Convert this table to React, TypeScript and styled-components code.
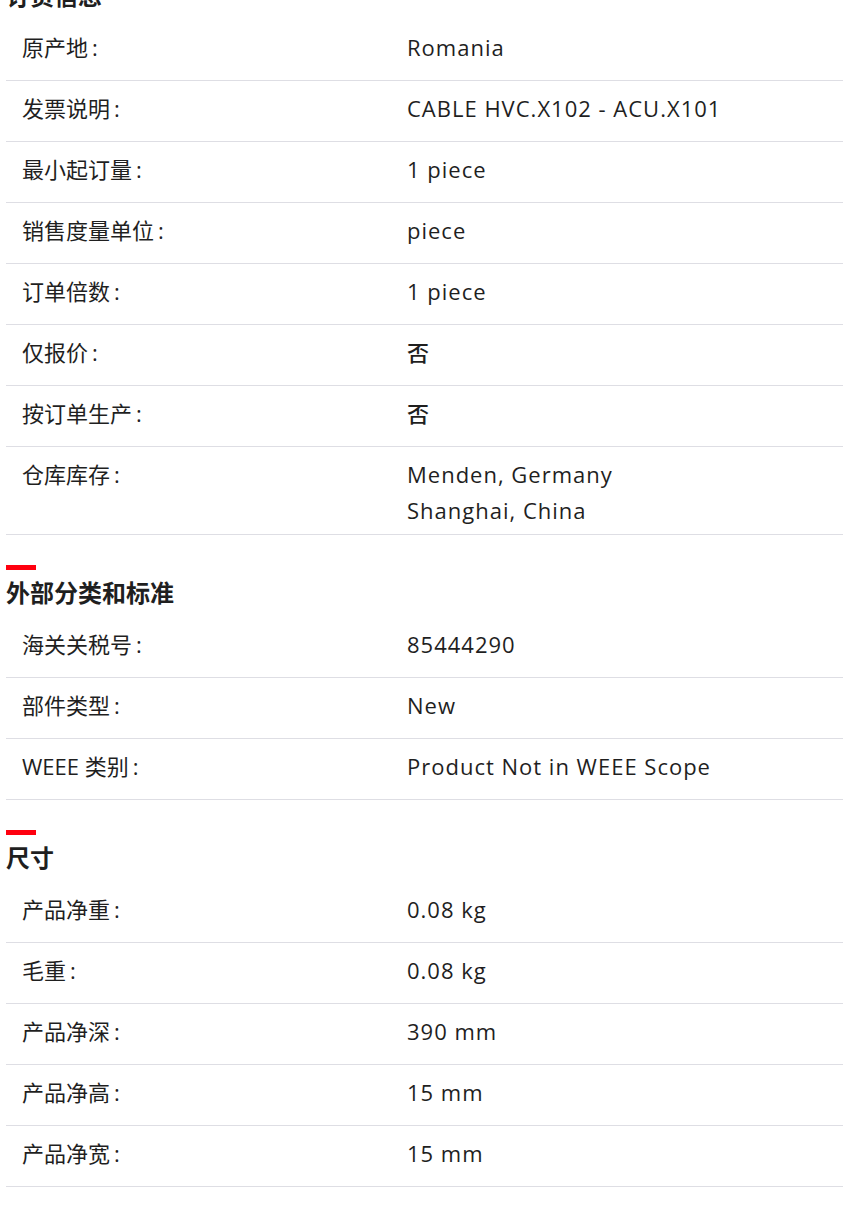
import React from 'react';
import styled, { createGlobalStyle } from 'styled-components';

const GlobalStyle = createGlobalStyle`
  html, body {
    margin: 0;
    padding: 0;
    background: #ffffff;
  }
  body {
    font-family: "Open Sans", "Noto Sans CJK SC", sans-serif;
    color: #1f1f1f;
  }
`;

const Page = styled.main`
  margin-top: -32px;
  padding-left: 6px;
  overflow: hidden;
`;

const Section = styled.section`
  & + & {
    margin-top: 30px;
  }
`;

const RedBar = styled.div`
  width: 30px;
  height: 5px;
  background: #ff000f;
`;

const Heading = styled.h2`
  margin: 0 0 7px;
  padding-top: 4px;
  font-family: "Noto Sans CJK SC", sans-serif;
  font-size: 24px;
  font-weight: 700;
  line-height: 36px;
  color: #1f1f1f;
`;

const List = styled.dl`
  margin: 0;
`;

const Row = styled.div`
  display: grid;
  grid-template-columns: 401px 1fr;
  box-sizing: border-box;
  min-height: 61px;
  padding: 9px 0 6px;
  border-bottom: 1px solid #dedee4;
`;

const Label = styled.dt`
  padding-left: 16px;
  font-family: "Open Sans", "Noto Sans CJK SC", sans-serif;
  font-size: 22px;
  font-weight: 400;
  line-height: 36px;
  color: #1f1f1f;
`;

const Colon = styled.span`
  margin-left: 4px;
`;

const Value = styled.dd`
  margin: 0;
  font-family: "Open Sans", "Noto Sans CJK SC", sans-serif;
  font-size: 22px;
  font-weight: 500;
  letter-spacing: 1px;
  line-height: 36px;
  color: #1f1f1f;
`;

const ValueLine = styled.div``;

type Item = {
  label: string;
  value: string[];
};

type Group = {
  title: string;
  items: Item[];
};

const groups: Group[] = [
  {
    title: '订货信息',
    items: [
      { label: '原产地', value: ['Romania'] },
      { label: '发票说明', value: ['CABLE HVC.X102 - ACU.X101'] },
      { label: '最小起订量', value: ['1 piece'] },
      { label: '销售度量单位', value: ['piece'] },
      { label: '订单倍数', value: ['1 piece'] },
      { label: '仅报价', value: ['否'] },
      { label: '按订单生产', value: ['否'] },
      { label: '仓库库存', value: ['Menden, Germany', 'Shanghai, China'] },
    ],
  },
  {
    title: '外部分类和标准',
    items: [
      { label: '海关关税号', value: ['85444290'] },
      { label: '部件类型', value: ['New'] },
      { label: 'WEEE 类别', value: ['Product Not in WEEE Scope'] },
    ],
  },
  {
    title: '尺寸',
    items: [
      { label: '产品净重', value: ['0.08 kg'] },
      { label: '毛重', value: ['0.08 kg'] },
      { label: '产品净深', value: ['390 mm'] },
      { label: '产品净高', value: ['15 mm'] },
      { label: '产品净宽', value: ['15 mm'] },
    ],
  },
];

const App = () => {
  return (
    <>
      <GlobalStyle />
      <Page>
        {groups.map((group) => (
          <Section key={group.title}>
            <RedBar />
            <Heading>{group.title}</Heading>
            <List>
              {group.items.map((item) => (
                <Row key={item.label}>
                  <Label>
                    {item.label}
                    <Colon>:</Colon>
                  </Label>
                  <Value>
                    {item.value.map((line) => (
                      <ValueLine key={line}>{line}</ValueLine>
                    ))}
                  </Value>
                </Row>
              ))}
            </List>
          </Section>
        ))}
      </Page>
    </>
  );
};

export default App;
